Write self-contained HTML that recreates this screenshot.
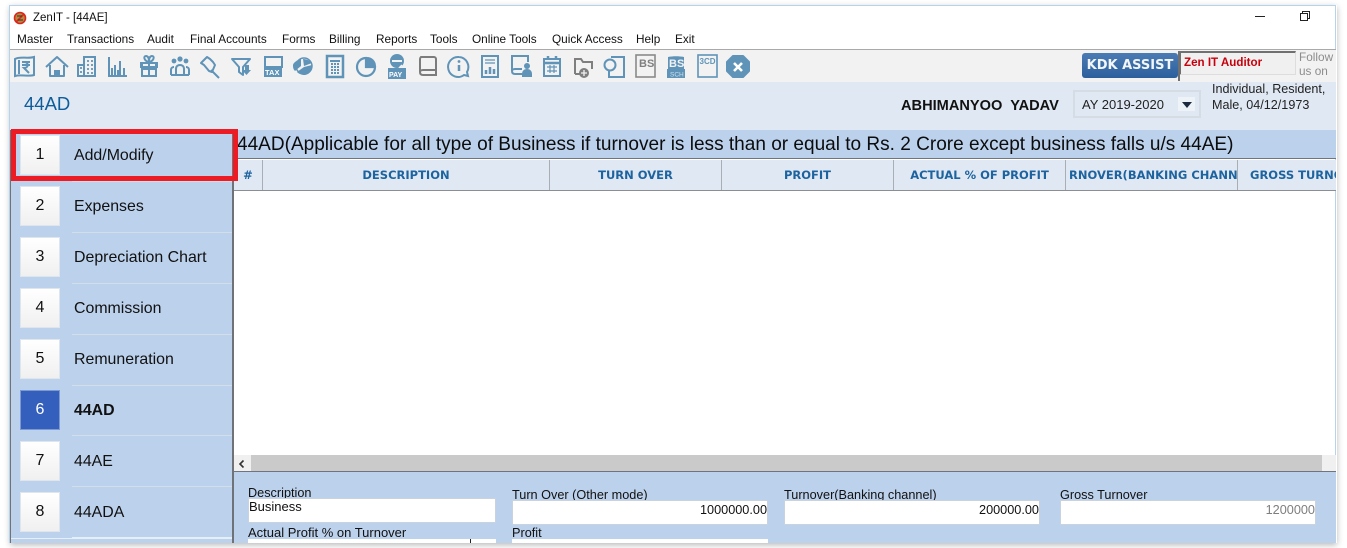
<!DOCTYPE html>
<html><head><meta charset="utf-8"><style>
html,body{margin:0;padding:0;background:#fff;width:1347px;height:548px;overflow:hidden}
body{position:relative;font-family:"Liberation Sans",sans-serif;color:#111}
.a{position:absolute;white-space:nowrap}
.menu{top:32px;font-size:11.8px;line-height:14px;color:#111}
.th{top:160px;height:30px;text-align:center;font:bold 11.5px/30px "DejaVu Sans",sans-serif;color:#1d639f;background:#e0e9f3;border-right:1px solid #a8aeb4;box-sizing:border-box;overflow:hidden}
.btn{left:21px;width:38px;height:38px;background:linear-gradient(#fff,#f0f0f0);box-shadow:0 0 0 1px #dfe5ec;text-align:center;font-size:16px;line-height:38px;color:#111}
.lab{left:74px;font-size:15.900px;line-height:20px;color:#111}
.sep{left:72px;width:160px;height:1px;background:#d4deea}
.fl{font-size:12.700px;line-height:14px;color:#111}
.inp{background:#fff;box-sizing:border-box;border:1px solid #c9d3df;font-size:12.700px;line-height:16px;color:#111}
svg.ic{position:absolute;top:52px;left:0}
</style></head><body>
<!-- window -->
<div class="a" style="left:10px;top:5px;width:1327px;height:538px;box-shadow:0 2px 6px rgba(0,0,0,.28);background:#fff"></div>
<div class="a" style="left:9px;top:5px;width:1327px;height:538px;border:1px solid #b5d3ec;border-bottom:0;box-sizing:border-box;background:#fff;overflow:hidden"></div>

<!-- title bar -->
<svg class="a" style="left:13px;top:11px" width="14" height="14" viewBox="0 0 14 14"><circle cx="7" cy="7" r="5.5" fill="#b88a3c"/><circle cx="7" cy="7" r="5.5" fill="none" stroke="#d8281e" stroke-width="1.6"/><path d="M3 11L11 3" stroke="#d8281e" stroke-width="1.6"/><path d="M4 5h5M5 9h5" stroke="#333" stroke-width="1"/></svg>
<div class="a" style="left:33px;top:11px;font-size:11.500px;line-height:14px;color:#111">ZenIT - [44AE]</div>
<div class="a" style="left:1255px;top:16px;width:10px;height:1px;background:#222"></div>
<svg class="a" style="left:1299px;top:10px" width="12" height="12" viewBox="0 0 12 12"><path d="M1.5 3.5h7v7h-7zM3.5 3.5v-2h7v7h-2" fill="none" stroke="#222" stroke-width="1"/></svg>

<!-- menu -->
<div class="a menu" style="left:17px">Master</div>
<div class="a menu" style="left:67px">Transactions</div>
<div class="a menu" style="left:147px">Audit</div>
<div class="a menu" style="left:190px">Final Accounts</div>
<div class="a menu" style="left:282px">Forms</div>
<div class="a menu" style="left:329px">Billing</div>
<div class="a menu" style="left:376px">Reports</div>
<div class="a menu" style="left:430px">Tools</div>
<div class="a menu" style="left:472px">Online Tools</div>
<div class="a menu" style="left:552px">Quick Access</div>
<div class="a menu" style="left:636px">Help</div>
<div class="a menu" style="left:675px">Exit</div>

<!-- toolbar -->
<div class="a" style="left:10px;top:49px;width:1326px;height:33px;background:#f2f2f2;border-top:1px solid #a9a9a9;box-sizing:border-box"></div>
<svg class="ic" width="760" height="28" viewBox="0 0 760 28" fill="none" stroke="#5f94b8" stroke-width="2">
<path d="M15 7c5-3 12 0 19-2v18c-6 2-13-1-19 1z" fill="#f2f2f2"/><path d="M19 8v14" /><path d="M22 10h8M22 13h8M24 10c5 0 5 6 0 6l5 5"/>
<path d="M46 15l11-10 11 10M50 13v11h14V13" stroke-linejoin="round"/><rect x="54" y="18" width="6" height="6" fill="#5f94b8" stroke="none"/>
<path d="M78 13h6v11h-6zM84 24V5h11v19z"/><path d="M87 9h2M91 9h2M87 13h2M91 13h2M87 17h2M91 17h2M87 21h2M91 21h2M80 16h2M80 20h2" stroke-width="1.7"/>
<path d="M108 24h19M109 5v18M115 13v10M120 9v14M124 16v7"/><path d="M112 16v7M118 18v5" stroke-width="2"/>
<path d="M142 11h14v13h-14zM141 11h16v4h-16zM149 11v13M142 17h14"/><path d="M149 10c-5-1-6-6-3-6s3 4 3 6c0-2 0-6 3-6s2 5-3 6"/>
<path d="M171 23v-5c0-3 3-3 3-3M189 23v-5c0-3-3-3-3-3M176 23v-6c0-3 2-4 4-4s4 1 4 4v6zM171 23h18"/><circle cx="174" cy="9" r="2.4" fill="#5f94b8" stroke="none"/><circle cx="180" cy="7" r="2.6" fill="#5f94b8" stroke="none"/><circle cx="186" cy="9" r="2.4" fill="#5f94b8" stroke="none"/>
<path d="M207 5l-6 6 3 2 5 6 3 1 3-7-2-3-3-3zM211 18l8 8" stroke-linejoin="round"/>
<path d="M232 7h18l-7 8v8l-4-3v-5z" stroke-linejoin="round"/><path d="M242 18h9l-4.500 5z" fill="#5f94b8" stroke="none"/><path d="M245 13h4v6h-4z" fill="#5f94b8" stroke="none"/>
<path d="M265 5h17v10h-17z"/><rect x="264" y="15" width="18" height="10" fill="#5f94b8" stroke="none"/>
<path d="M293 13c0-2 4-5 8-6v7l-6 5c-2-2-2-4-2-6z" fill="#5f94b8" stroke="none"/><path d="M303 7c4 0 7 2 9 4l-8 3zM304 15l8-2c1 3-1 9-7 10-3 0-6-1-8-3z" fill="#5f94b8" stroke="none"/><circle cx="304" cy="14" r="8" stroke-width="1.500" fill="none"/>
<rect x="327" y="4" width="16" height="21" stroke-width="2.500"/><path d="M330 9h10" stroke-width="2"/><path d="M331 12h2M334 12h2M337 12h2M331 15h2M334 15h2M337 15h2M331 18h2M334 18h2M337 18h2M331 21h2M334 21h2M337 21h2" stroke-width="2"/>
<path d="M366 6a9 9 0 1 0 9 9h-9z" stroke-width="2.200"/><path d="M367 5a9 9 0 0 1 9 9h-9z" fill="#5f94b8" stroke="none"/>
<circle cx="397" cy="9" r="7" fill="#5f94b8" stroke="none"/><path d="M392 9h10" stroke="#f2f2f2" stroke-width="2"/><path d="M402 13l-3 3" stroke="#f2f2f2" stroke-width="1.500"/><path d="M388 16h18v11h-18z" fill="#5f94b8" stroke="none"/>
<path d="M421 5h13c1 0 2 1 2 2v16h-13c-2 0-3-1-3-3V7c0-1 1-2 1-2zM420 20c0-1 1-2 3-2h13" stroke="#7c7c7c"/>
<path d="M459 5a10 10 0 1 0 5 18l4 1-1-4a10 10 0 0 0-8-15z"/><path d="M459 13v6" stroke-width="2.500"/><circle cx="459" cy="9.500" r="1.400" fill="#5f94b8" stroke="none"/>
<rect x="482" y="4" width="16" height="21"/><path d="M485 8h10M485 11h10" stroke-width="1.300"/><path d="M486 22v-4M490 22v-7M494 22v-5" stroke-width="2.500"/>
<path d="M528 10V4h-16v15c0 2 1 3 3 3h7M512 19c0-1 1-2 3-2h7"/><circle cx="527" cy="14" r="3" fill="#5f94b8" stroke="none"/><path d="M522 25v-3c0-3 2-5 5-5s5 2 5 5v3z" fill="#5f94b8" stroke="none"/>
<rect x="544" y="7" width="16" height="17"/><path d="M544 11h16" stroke-width="2.500"/><path d="M548 4v4M556 4v4" stroke-width="2.500"/><path d="M547 15h10M547 19h10M550 13v8M554 13v8" stroke-width="1.200"/>
<path d="M575 22V7h6l2 3h9v7" stroke="#7f7f7f"/><path d="M575 22h6" stroke="#7f7f7f"/><circle cx="584" cy="21" r="5" fill="#7f7f7f" stroke="none"/><path d="M581 21h6M584 18v6" stroke="#f2f2f2" stroke-width="1.300"/>
<path d="M611 5h13v20h-15v-6" /><circle cx="610" cy="13" r="5.500" fill="#f2f2f2"/>
<rect x="636" y="3" width="19" height="22" stroke="#8a8a8a" stroke-width="1.600"/>
<rect x="667" y="17" width="18" height="9" fill="#5f94b8" stroke="none"/><path d="M668 18V5c5-1 11-1 16 0v13" fill="#5f94b8" stroke="none"/>
<rect x="698" y="3" width="19" height="22" stroke-width="1.600"/>
<path d="M733 4h10l6 6v9l-6 6h-10l-6-6v-9z" fill="#5f94b8" stroke="#5f94b8" stroke-linejoin="round"/><path d="M734 11l8 8M742 11l-8 8" stroke="#fff" stroke-width="2.600"/>
<g font-family="Liberation Sans" stroke="none" font-weight="bold">
<text x="265" y="23" font-size="7.500" fill="#fff">TAX</text>
<text x="389" y="25" font-size="7" fill="#fff">PAY</text>
<text x="639" y="15" font-size="11" fill="#7f7f7f">BS</text>
<text x="669" y="15" font-size="11" fill="#f2f2f2">BS</text>
<text x="670" y="24.500" font-size="6.500" fill="#cfe0ec" font-weight="normal">SCH</text>
<text x="699.500" y="12" font-size="8" fill="#5f94b8">3CD</text>
</g></svg>

<!-- KDK -->
<div class="a" style="left:1082px;top:53px;width:96px;height:25px;background:linear-gradient(#4b7bb3,#2b5f9c);border-radius:3px;color:#f2f6fb;font:bold 13px/25px 'DejaVu Sans',sans-serif;text-align:center;overflow:hidden">KDK ASSIST</div>
<div class="a" style="left:1179px;top:51px;width:117px;height:24px;background:#f0f0f0;border-left:2px solid #707070;border-top:2px solid #707070;border-right:1px solid #ddd;border-bottom:1px solid #ddd;box-sizing:border-box"></div>
<div class="a" style="left:1178px;top:51px;width:2px;height:30px;background:#707070"></div>
<div class="a" style="left:1184px;top:56px;font:bold 11.600px/14px 'Liberation Sans',sans-serif;color:#c8000c">Zen IT Auditor</div>
<div class="a" style="left:1299px;top:51px;font-size:11.800px;line-height:13.500px;color:#8c8c8c">Follow<br>us on</div>

<!-- header band -->
<div class="a" style="left:10px;top:82px;width:1326px;height:48px;background:#e0e9f3"></div>
<div class="a" style="left:24px;top:94px;font-size:18.500px;line-height:20px;color:#0f5c9a">44AD</div>
<div class="a" style="left:901px;top:97px;font:bold 14.600px/18px 'Liberation Sans',sans-serif;color:#111;white-space:pre">ABHIMANYOO  YADAV</div>
<div class="a" style="left:1073px;top:90px;width:128px;height:28px;border:2px solid #d5dce4;box-sizing:border-box;background:#e0e9f3"></div>
<div class="a" style="left:1082px;top:97px;font-size:13px;line-height:16px;color:#222">AY 2019-2020</div>
<div class="a" style="left:1178px;top:97px;width:17px;height:14px;background:#eef3f8"></div>
<div class="a" style="left:1182px;top:102px;width:0;height:0;border-left:5px solid transparent;border-right:5px solid transparent;border-top:6px solid #1c2b3f"></div>
<div class="a" style="left:1212px;top:81px;font-size:12.600px;line-height:16px;color:#222">Individual, Resident,<br>Male, 04/12/1973</div>

<!-- right title band -->
<div class="a" style="left:233px;top:130px;width:1103px;height:29px;background:#bcd1ec;border-bottom:1px solid #70757c;box-sizing:border-box"></div>
<div class="a" style="left:237px;top:133px;font-size:19.050px;line-height:23px;color:#0c0c0c">44AD(Applicable for all type of Business if turnover is less than or equal to Rs. 2 Crore except business falls u/s 44AE)</div>

<!-- table header -->
<div class="a th" style="left:234px;width:29px">#</div>
<div class="a th" style="left:263px;width:287px">DESCRIPTION</div>
<div class="a th" style="left:550px;width:172px">TURN OVER</div>
<div class="a th" style="left:722px;width:172px">PROFIT</div>
<div class="a th" style="left:894px;width:172px">ACTUAL % OF PROFIT</div>
<div class="a th" style="left:1066px;width:172px;text-align:left;padding-left:3px">RNOVER(BANKING CHANNEL</div>
<div class="a th" style="left:1238px;width:98px;text-align:left;padding-left:12px;border-right:0">GROSS TURNOVER</div>
<div class="a" style="left:234px;top:190px;width:1102px;height:1px;background:#8b8f93"></div>

<!-- scrollbar -->
<div class="a" style="left:234px;top:455px;width:1102px;height:16px;background:#f0f0f0"></div>
<div class="a" style="left:251px;top:455px;width:1071px;height:16px;background:#cacaca"></div>
<svg class="a" style="left:237px;top:459px" width="10" height="10" viewBox="0 0 10 10"><path d="M6.500 1.500L3 5l3.500 3.500" fill="none" stroke="#333" stroke-width="1.600"/></svg>
<div class="a" style="left:234px;top:471px;width:1102px;height:1px;background:#70757c"></div>

<!-- form -->
<div class="a" style="left:234px;top:472px;width:1102px;height:71px;background:#bcd1ec;overflow:hidden"></div>
<div class="a fl" style="left:248px;top:486px">Description</div>
<div class="a inp" style="left:248px;top:498px;width:248px;height:25px;padding-left:0;line-height:16px;font-size:13px">Business</div>
<div class="a fl" style="left:512px;top:488px;height:12px;overflow:hidden">Turn Over (Other mode)</div>
<div class="a inp" style="left:512px;top:500px;width:256px;height:25px;text-align:right;line-height:19px">1000000.00</div>
<div class="a fl" style="left:784px;top:488px;height:12px;overflow:hidden">Turnover(Banking channel)</div>
<div class="a inp" style="left:784px;top:500px;width:256px;height:25px;text-align:right;line-height:19px">200000.00</div>
<div class="a fl" style="left:1060px;top:488px">Gross Turnover</div>
<div class="a inp" style="left:1060px;top:500px;width:256px;height:25px;text-align:right;line-height:19px;color:#7e7e7e">1200000</div>
<div class="a fl" style="left:248px;top:526px;font-size:13px">Actual Profit % on Turnover</div>
<div class="a" style="left:248px;top:539px;width:248px;height:4px;background:#fff"></div>
<div class="a" style="left:470px;top:539px;width:1px;height:4px;background:#222"></div>
<div class="a fl" style="left:512px;top:526px">Profit</div>
<div class="a" style="left:512px;top:539px;width:256px;height:4px;background:#fff"></div>

<!-- sidebar -->
<div class="a" style="left:10px;top:130px;width:224px;height:413px;background:#bcd1ec;border-left:1px solid #6f7378;border-right:2px solid #6f7378;box-sizing:border-box"></div>
<div class="a sep" style="top:181px"></div><div class="a sep" style="top:232px"></div><div class="a sep" style="top:283px"></div><div class="a sep" style="top:334px"></div><div class="a sep" style="top:385px"></div><div class="a sep" style="top:435px"></div><div class="a sep" style="top:486px"></div><div class="a sep" style="top:537px;background:#e6eef7"></div>
<div class="a" style="left:11px;top:538px;width:221px;height:1px;background:#e6eef7"></div>
<div class="a btn" style="top:136px">1</div><div class="a lab" style="top:146px">Add/Modify</div>
<div class="a btn" style="top:187px">2</div><div class="a lab" style="top:197px">Expenses</div>
<div class="a btn" style="top:238px">3</div><div class="a lab" style="top:248px">Depreciation Chart</div>
<div class="a btn" style="top:289px">4</div><div class="a lab" style="top:299px">Commission</div>
<div class="a btn" style="top:340px">5</div><div class="a lab" style="top:350px">Remuneration</div>
<div class="a btn" style="top:391px;background:#355fbd;color:#fff;box-shadow:0 0 0 1px #7c9ad0">6</div><div class="a lab" style="top:401px;font-weight:bold">44AD</div>
<div class="a btn" style="top:442px">7</div><div class="a lab" style="top:452px">44AE</div>
<div class="a btn" style="top:493px">8</div><div class="a lab" style="top:503px">44ADA</div>

<!-- red highlight -->
<div class="a" style="left:11px;top:129px;width:227px;height:52px;border:5px solid #ed1c24;box-sizing:border-box"></div>
</body></html>
